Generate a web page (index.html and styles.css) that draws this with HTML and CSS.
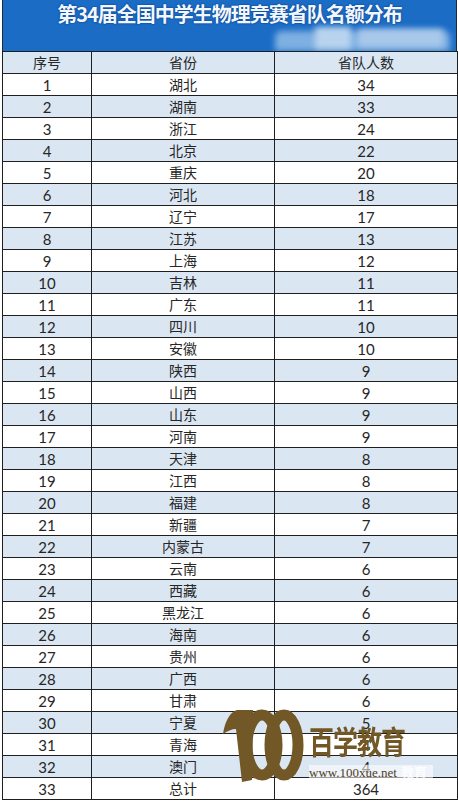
FILE: index.html
```html
<!DOCTYPE html>
<html lang="zh">
<head>
<meta charset="utf-8">
<title>第34届全国中学生物理竞赛省队名额分布</title>
<link rel="stylesheet" href="styles.css">
</head>
<body>
<div class="sheet">
  <div class="banner">
    <h1 class="title">第34届全国中学生物理竞赛省队名额分布</h1>
    <div class="smudge smudge-a"></div>
    <div class="smudge smudge-b"></div>
    <div class="smudge smudge-c"></div>
  </div>
  <table class="grid">
    <colgroup><col class="c1"><col class="c2"><col class="c3"></colgroup>
    <thead>
      <tr class="alt"><td>序号</td><td>省份</td><td>省队人数</td></tr>
    </thead>
    <tbody>
      <tr><td>1</td><td>湖北</td><td>34</td></tr>
      <tr class="alt"><td>2</td><td>湖南</td><td>33</td></tr>
      <tr><td>3</td><td>浙江</td><td>24</td></tr>
      <tr class="alt"><td>4</td><td>北京</td><td>22</td></tr>
      <tr><td>5</td><td>重庆</td><td>20</td></tr>
      <tr class="alt"><td>6</td><td>河北</td><td>18</td></tr>
      <tr><td>7</td><td>辽宁</td><td>17</td></tr>
      <tr class="alt"><td>8</td><td>江苏</td><td>13</td></tr>
      <tr><td>9</td><td>上海</td><td>12</td></tr>
      <tr class="alt"><td>10</td><td>吉林</td><td>11</td></tr>
      <tr><td>11</td><td>广东</td><td>11</td></tr>
      <tr class="alt"><td>12</td><td>四川</td><td>10</td></tr>
      <tr><td>13</td><td>安徽</td><td>10</td></tr>
      <tr class="alt"><td>14</td><td>陕西</td><td>9</td></tr>
      <tr><td>15</td><td>山西</td><td>9</td></tr>
      <tr class="alt"><td>16</td><td>山东</td><td>9</td></tr>
      <tr><td>17</td><td>河南</td><td>9</td></tr>
      <tr class="alt"><td>18</td><td>天津</td><td>8</td></tr>
      <tr><td>19</td><td>江西</td><td>8</td></tr>
      <tr class="alt"><td>20</td><td>福建</td><td>8</td></tr>
      <tr><td>21</td><td>新疆</td><td>7</td></tr>
      <tr class="alt"><td>22</td><td>内蒙古</td><td>7</td></tr>
      <tr><td>23</td><td>云南</td><td>6</td></tr>
      <tr class="alt"><td>24</td><td>西藏</td><td>6</td></tr>
      <tr><td>25</td><td>黑龙江</td><td>6</td></tr>
      <tr class="alt"><td>26</td><td>海南</td><td>6</td></tr>
      <tr><td>27</td><td>贵州</td><td>6</td></tr>
      <tr class="alt"><td>28</td><td>广西</td><td>6</td></tr>
      <tr><td>29</td><td>甘肃</td><td>6</td></tr>
      <tr class="alt"><td>30</td><td>宁夏</td><td>5</td></tr>
      <tr><td>31</td><td>青海</td><td>4</td></tr>
      <tr class="alt"><td>32</td><td>澳门</td><td>4</td></tr>
      <tr><td>33</td><td>总计</td><td>364</td></tr>
    </tbody>
  </table>

  <div class="watermark">
    <svg class="logo100" width="84" height="76" viewBox="0 0 84 76" aria-hidden="true">
      <path d="M2 27 C4 14 9 5 16 3 L32 3 L31 73 L21 75 L15 22 C11 22 6 24 2 27 Z" fill="#725826"/>
      <ellipse cx="41" cy="38" rx="15" ry="30" fill="none" stroke="#725826" stroke-width="11"/>
      <ellipse cx="63" cy="38" rx="14" ry="30" fill="none" stroke="#725826" stroke-width="11"/>
    </svg>
    <div class="brand">
      <div class="brand-name">百学教育</div>
      <div class="brand-url"><span class="url">www.100xue.net</span><span class="ghost">教育</span></div>
    </div>
  </div>
</div>
</body>
</html>
```

FILE: styles.css
```css
html, body {
  margin: 0;
  padding: 0;
  background: #ffffff;
}

body {
  font-family: "Lato", "Noto Sans CJK SC", sans-serif;
  width: 458px;
  height: 802px;
  overflow: hidden;
}

.sheet {
  position: relative;
  width: 455px;
  margin-left: 2px;
}

.banner {
  position: relative;
  height: 51px;
  box-sizing: border-box;
  background: #1a6cc5;
  border-left: 1px solid #1d2a3a;
  border-right: 1px solid #1d2a3a;
  overflow: hidden;
}

.title {
  margin: 0;
  padding-top: 2px;
  text-align: center;
  font-family: "Noto Sans CJK SC", sans-serif;
  font-size: 20px;
  line-height: 24px;
  font-weight: 700;
  letter-spacing: -1px;
  color: #f2f7ff;
  text-shadow: 0 0 2px #0b3f85, 0 0 1px #0b3f85;
}

.smudge {
  position: absolute;
  filter: blur(3px);
}

.smudge-a {
  left: 272px;
  top: 31px;
  width: 175px;
  height: 20px;
  background: #7fb0e2;
  border-radius: 6px 6px 0 0;
}

.smudge-b {
  left: 312px;
  top: 27px;
  width: 36px;
  height: 22px;
  background: #b9d3ee;
}

.smudge-c {
  left: 355px;
  top: 29px;
  width: 85px;
  height: 18px;
  background: #a9c8ea;
}

.grid {
  border-collapse: collapse;
  table-layout: fixed;
  width: 455px;
}

.c1 { width: 89px; }
.c2 { width: 183px; }
.c3 { width: 183px; }

.grid td {
  border: 1px solid #1f1f1f;
  height: 21px;
  padding: 0;
  text-align: center;
  vertical-align: middle;
  font-size: 15px;
  line-height: 20px;
  color: #262626;
  background: #ffffff;
}

.grid td:nth-child(2),
.grid thead td {
  font-size: 14px;
}

.grid tr.alt td {
  background: #dbe6f3;
}

.watermark {
  position: absolute;
  left: 219px;
  top: 707px;
  display: flex;
  align-items: flex-start;
  gap: 4px;
}

.logo100 {
  display: block;
}

.brand {
  display: flex;
  flex-direction: column;
  padding-top: 14px;
}

.brand-name {
  font-family: "Noto Sans CJK SC", sans-serif;
  font-weight: 700;
  font-size: 25px;
  line-height: 30px;
  letter-spacing: -1px;
  color: #725826;
  transform: scaleY(1.25);
  transform-origin: top left;
}

.brand-url {
  display: flex;
  align-items: baseline;
  gap: 4px;
  margin-top: 14px;
  background: rgba(255, 255, 255, 0.55);
  padding-right: 6px;
}

.url {
  font-family: "Liberation Serif", serif;
  font-size: 13px;
  line-height: 14px;
  color: #4f3d1c;
}

.ghost {
  font-family: "Noto Sans CJK SC", sans-serif;
  font-size: 13px;
  line-height: 14px;
  color: rgba(255, 255, 255, 0.85);
  font-weight: 700;
}
```
